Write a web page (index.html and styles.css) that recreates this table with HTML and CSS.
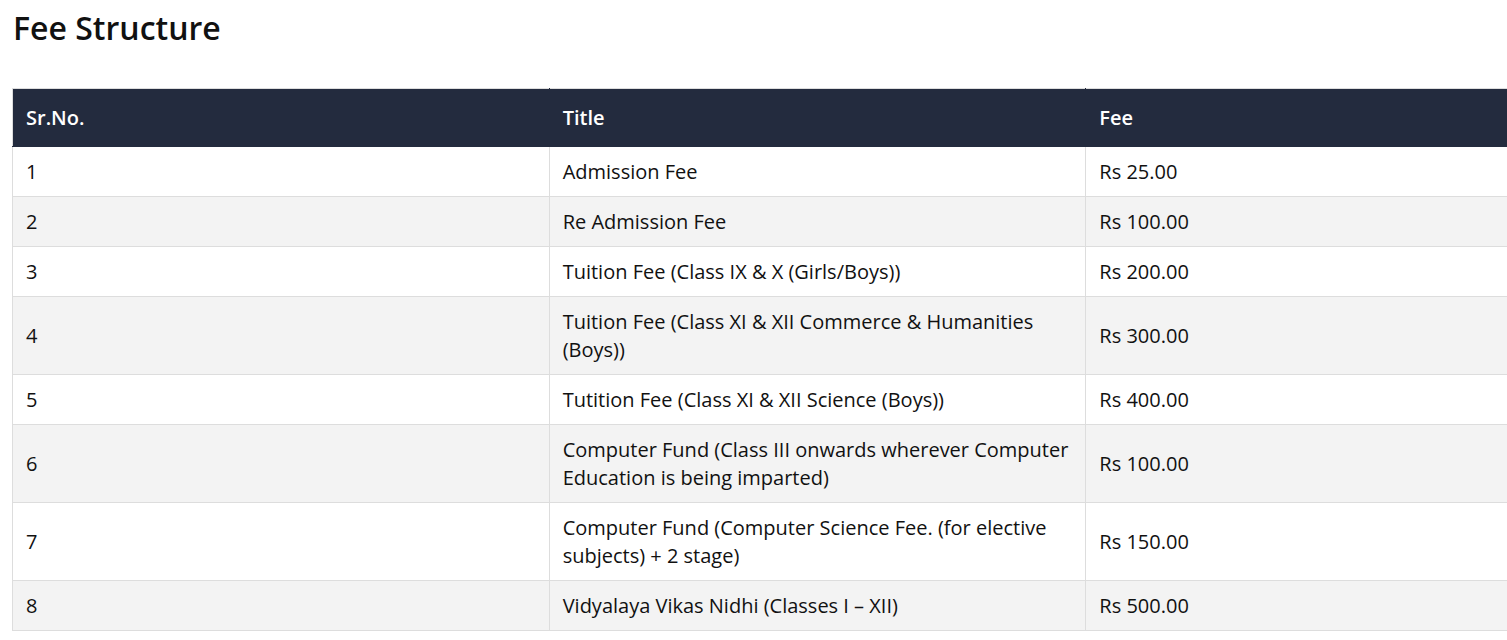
FILE: index.html
```html
<!DOCTYPE html>
<html lang="en">
<head>
<meta charset="utf-8">
<title>Fee Structure</title>
<link rel="stylesheet" href="styles.css">
</head>
<body>
<main class="page">
  <h2 class="title">Fee Structure</h2>
  <table class="fees">
    <thead>
      <tr><th>Sr.No.</th><th>Title</th><th>Fee</th></tr>
    </thead>
    <tbody>
      <tr><td>1</td><td>Admission Fee</td><td>Rs 25.00</td></tr>
      <tr><td>2</td><td>Re Admission Fee</td><td>Rs 100.00</td></tr>
      <tr><td>3</td><td>Tuition Fee (Class IX &amp; X (Girls/Boys))</td><td>Rs 200.00</td></tr>
      <tr><td>4</td><td>Tuition Fee (Class XI &amp; XII Commerce &amp; Humanities (Boys))</td><td>Rs 300.00</td></tr>
      <tr><td>5</td><td>Tutition Fee (Class XI &amp; XII Science (Boys))</td><td>Rs 400.00</td></tr>
      <tr><td>6</td><td>Computer Fund (Class III onwards wherever Computer Education is being imparted)</td><td>Rs 100.00</td></tr>
      <tr><td>7</td><td>Computer Fund (Computer Science Fee. (for elective subjects) + 2 stage)</td><td>Rs 150.00</td></tr>
      <tr><td>8</td><td>Vidyalaya Vikas Nidhi (Classes I – XII)</td><td>Rs 500.00</td></tr>
    </tbody>
  </table>
</main>
</body>
</html>
```
FILE: styles.css
```css
html, body {
  margin: 0;
  padding: 0;
  overflow-x: hidden;
  background: #fff;
}
.page {
  padding: 9px 12px 0 12px;
  font-family: "Open Sans", "Liberation Sans", sans-serif;
  color: #111;
}
.title {
  margin: 0 0 41px 1px;
  font-size: 32px;
  font-weight: 600;
  line-height: 38px;
  color: #111;
}
.fees {
  width: 1611px;
  table-layout: fixed;
  border-collapse: collapse;
  font-size: 20px;
  line-height: 28px;
}
.fees th, .fees td {
  border: 1px solid #ddd;
  padding: 10.5px 13px;
  text-align: left;
  vertical-align: middle;
}
.fees th {
  background: #232b3e;
  color: #fff;
  font-weight: 600;
  padding: 15px 13px 14px 13px;
  border-color: #232b3e;
  border-top-color: #ddd;
}
.fees thead th:first-child { border-left-color: #ddd; }
.fees td { color: #111; }
.fees tbody tr:nth-child(even) td { background: #f3f3f3; }
```
